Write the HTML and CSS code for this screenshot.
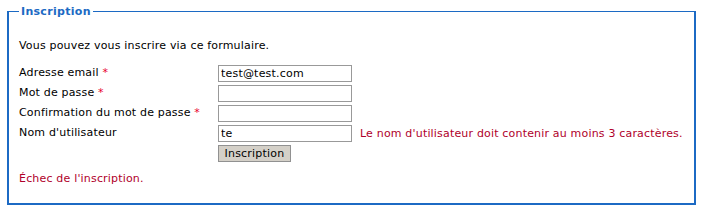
FILE: index.html
```html
<!DOCTYPE html>
<html>
<head>
<meta charset="utf-8">
<link rel="stylesheet" href="styles.css">
</head>
<body>
<fieldset class="box">
  <legend class="title">Inscription</legend>
  <p class="intro">Vous pouvez vous inscrire via ce formulaire.</p>
  <div class="form">
    <div class="row">
      <label class="lbl">Adresse email <span class="req">*</span></label>
      <input class="field" type="text" value="test@test.com">
    </div>
    <div class="row">
      <label class="lbl">Mot de passe <span class="req">*</span></label>
      <input class="field" type="password">
    </div>
    <div class="row">
      <label class="lbl">Confirmation du mot de passe <span class="req">*</span></label>
      <input class="field" type="password">
    </div>
    <div class="row">
      <label class="lbl">Nom d'utilisateur</label>
      <input class="field" type="text" value="te">
      <span class="err">Le nom d'utilisateur doit contenir au moins 3 caractères.</span>
    </div>
    <div class="row">
      <span class="lbl"></span>
      <button class="btn" type="button">Inscription</button>
    </div>
  </div>
  <p class="fail">Échec de l'inscription.</p>
</fieldset>
</body>
</html>
```
FILE: styles.css
```css
html, body {
  margin: 0;
  padding: 0;
  background: #fff;
}
body {
  padding: 5px 7px 0 7px;
  font-family: "DejaVu Sans", Verdana, sans-serif;
  font-size: 11px;
  letter-spacing: 0.18px;
  color: #000;
}
.box {
  margin: 0;
  padding: 0 0 0 10px;
  height: 200px;
  box-sizing: border-box;
  border: 1px solid #1c6ac4;
  border-left-width: 2px;
  border-bottom-width: 2px;
  border-right-width: 2px;
}
.title {
  font-weight: bold;
  color: #1c6ac4;
  padding: 0 2px;
  margin-left: 0;
  letter-spacing: 0.3px;
}
.intro {
  margin: 21px 0 0 0;
  line-height: 14px;
}
.form {
  margin-top: 12px;
  display: flex;
  flex-direction: column;
  gap: 3px;
}
.row {
  display: flex;
  align-items: flex-start;
  height: 17px;
}
.lbl {
  width: 199px;
  flex: none;
  line-height: 14px;
  margin-top: 1px;
}
.req {
  color: #e8002a;
}
.field {
  box-sizing: border-box;
  width: 134px;
  height: 17px;
  margin: 0;
  padding: 0 2px;
  border: 1px solid #999;
  font: 11px "DejaVu Sans", Verdana, sans-serif;
  letter-spacing: 0.2px;
  color: #000;
  background: #fff;
}
.err {
  color: #b0002a;
  margin-left: 8px;
  line-height: 14px;
  margin-top: 2px;
}
.btn {
  box-sizing: border-box;
  height: 17px;
  width: 73px;
  padding: 0;
  margin: 0;
  border: 1px solid #919191;
  background: #d4d0c8;
  font: 11px "DejaVu Sans", Verdana, sans-serif;
  letter-spacing: 0.2px;
  color: #000;
  line-height: 14px;
}
.fail {
  margin: 10px 0 0 0;
  color: #b0002a;
  line-height: 14px;
}
```
